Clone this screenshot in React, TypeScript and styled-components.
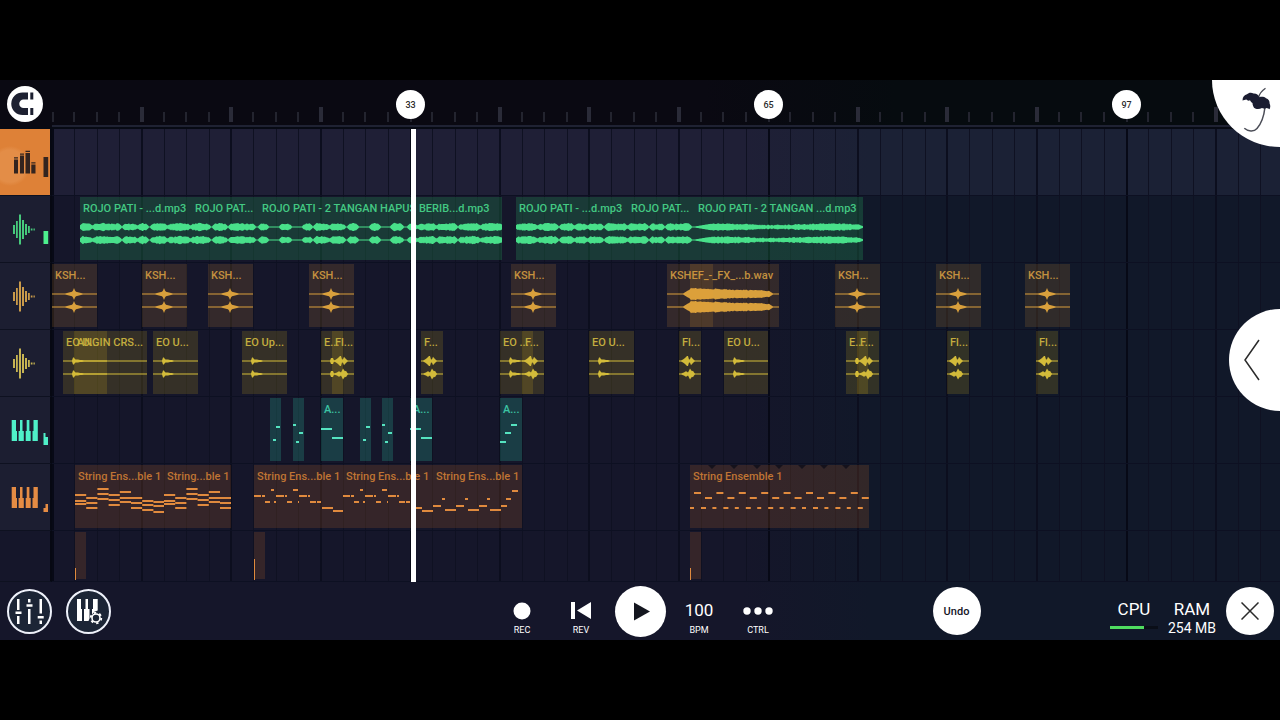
import React from "react";
import styled, { createGlobalStyle, css } from "styled-components";

/* ---------- theme values ---------- */

const BEAT_BLOCK = 358; // width of sixteen grid columns
const HEADER_W = 52;

type Tone = "green" | "amber" | "yellow" | "teal" | "orange";

const ink: Record<Tone, string> = {
  green: "#48e08a",
  amber: "#d9a03c",
  yellow: "#d3bb3a",
  teal: "#55e3c0",
  orange: "#e08a3e",
};
const labelInk: Record<Tone, string> = {
  green: "#43c983",
  amber: "#c3913f",
  yellow: "#c3ad3f",
  teal: "#3cc4a4",
  orange: "#bf7434",
};
const wash: Record<Tone, string> = {
  green: "rgba(48, 220, 110, 0.19)",
  amber: "rgba(240, 160, 50, 0.14)",
  yellow: "rgba(240, 200, 30, 0.15)",
  teal: "rgba(50, 220, 180, 0.2)",
  orange: "rgba(240, 130, 40, 0.15)",
};

/* One repeating block of vertical lines; `pick` returns the line's width or 0. */
const lineBlock = (color: string, pick: (i: number) => number) => {
  const stops: string[] = [];
  for (let i = 0; i < 16; i++) {
    const w = pick(i);
    if (!w) continue;
    const x = Math.round((BEAT_BLOCK / 16) * i);
    const a = i === 0 ? 0 : x - Math.floor(w / 2);
    stops.push(`transparent ${a}px, ${color} ${a}px, ${color} ${a + w}px, transparent ${a + w}px`);
  }
  return `linear-gradient(to right, ${stops.join(", ")})`;
};

const GlobalStyle = createGlobalStyle`
  * { box-sizing: border-box; }
  body {
    margin: 0;
    background: #000;
    color: #fff;
    font-family: Roboto, "Liberation Sans", sans-serif;
  }
  button { font: inherit; color: inherit; border: 0; padding: 0; background: none; cursor: pointer; }
  svg { display: block; }
`;

/* ---------- layout ---------- */

const Page = styled.div`
  min-height: 100vh;
  display: flex;
  flex-direction: column;
  justify-content: center;
`;

const Studio = styled.main`
  position: relative;
  overflow: hidden;
  background: linear-gradient(to right, #15162a 0, #15162a 58%, #111829 68%, #111829 100%);
`;

const Ruler = styled.header`
  display: flex;
  height: 49px;
  background: linear-gradient(to right, #0a0912 0, #0a0912 55%, #060b0f 70%);
  border-bottom: 2px solid #070a14;
`;

const RulerSide = styled.div`
  flex: 0 0 ${HEADER_W}px;
  padding: 6px 0 0 7px;
`;

const RulerTrack = styled.div`
  position: relative;
  flex: 1;
  border-bottom: 2px solid #1f2233;
  background-image: ${lineBlock("#23242f", (i) => (i % 4 || i === 0 ? 2 : 0))},
    ${lineBlock("#2a2b38", (i) => (i % 4 || i === 0 ? 0 : 4))};
  background-size: ${BEAT_BLOCK}px 10px, ${BEAT_BLOCK}px 15px;
  background-position: 0 32px, 0 27px;
  background-repeat: repeat-x;
`;

const BarMarker = styled.button<{ $x: number }>`
  position: absolute;
  top: 10px;
  left: ${(p) => p.$x - 14}px;
  width: 29px;
  height: 29px;
  border-radius: 50%;
  background: #fff;
  color: #2c2c2c;
  font-size: 9px;
  font-weight: 500;
  line-height: 28px;
`;

const Round = styled.button<{ $size: number }>`
  flex: none;
  display: grid;
  place-items: center;
  width: ${(p) => p.$size}px;
  height: ${(p) => p.$size}px;
  border-radius: 50%;
  background: #fff;
  color: #14161f;
`;

const OutlineRound = styled(Round)`
  background: #1c2536;
  border: 2px solid #eef1fa;
  color: #fff;
`;

const Playlist = styled.section`
  position: relative;
`;

const Row = styled.div<{ $short?: boolean }>`
  display: flex;
  height: ${(p) => (p.$short ? 51 : 67)}px;
`;

const TrackHead = styled.button<{ $tone?: "main" | "empty" }>`
  flex: 0 0 ${HEADER_W}px;
  border-right: 2px solid #060812;
  border-bottom: 1px solid #0e1120;
  background: #1c1e31;
  ${(p) =>
    p.$tone === "main" &&
    css`
      background: radial-gradient(circle at 10px 37px, #e38d47 0, #e38d47 16px, #de8137 20px);
    `}
  ${(p) =>
    p.$tone === "empty" &&
    css`
      background: transparent;
    `}
`;

const Lane = styled.div<{ $lit?: boolean }>`
  position: relative;
  flex: 1;
  overflow: hidden;
  border-bottom: 1px solid #0d1022;
  background-color: ${(p) => (p.$lit ? "rgba(90, 90, 130, 0.14)" : "transparent")};
  background-image: ${lineBlock("#070916", (i) => (i === 0 ? 2 : 0))},
    ${lineBlock("#0c0e1e", (i) => (i % 4 === 0 && i > 0 ? 2 : 0))},
    ${lineBlock("#0f1122", (i) => (i % 4 ? 1 : 0))};
  background-size: ${BEAT_BLOCK}px 100%;
`;

const ClipBox = styled.div<{ $x: number; $w: number; $tone: Tone }>`
  position: absolute;
  top: 1px;
  bottom: 2px;
  left: ${(p) => p.$x - HEADER_W}px;
  width: ${(p) => p.$w}px;
  background: ${(p) => wash[p.$tone]};
  color: ${(p) => ink[p.$tone]};
`;

const ClipName = styled.div<{ $tone: Tone }>`
  height: 18px;
  padding: 5px 0 0 3px;
  font-size: 11px;
  font-weight: 500;
  line-height: 13px;
  white-space: nowrap;
  color: ${(p) => labelInk[p.$tone]};
`;

const Playhead = styled.div`
  position: absolute;
  top: 0;
  bottom: 0;
  left: 411px;
  width: 5px;
  background: #fff;
`;

const LogoCorner = styled.button`
  position: absolute;
  top: 0;
  right: 0;
  width: 68px;
  height: 67px;
  border-radius: 0 0 0 100%;
  background: #fff;
`;

const DrawerHandle = styled.button`
  position: absolute;
  top: 229px;
  right: 0;
  width: 51px;
  height: 102px;
  padding-left: 14px;
  border-radius: 51px 0 0 51px;
  background: #fff;
`;

const Transport = styled.footer`
  display: grid;
  grid-template-columns: 1fr auto 1fr;
  align-items: center;
  height: 58px;
`;

const SideTools = styled.div`
  display: flex;
  gap: 14px;
  padding-left: 7px;
`;

const Controls = styled.div`
  display: flex;
  align-items: center;
`;

const Control = styled.button`
  width: 59px;
  height: 58px;
  padding-top: 17px;
  display: flex;
  flex-direction: column;
  align-items: center;
  gap: 1px;
  font-size: 9px;
  line-height: 14px;
`;

const PlaySlot = styled.div`
  display: grid;
  place-items: center;
  width: 59px;
  height: 58px;
`;

const ControlFace = styled.span`
  height: 23px;
  display: grid;
  place-items: center;
  font-size: 17px;
  line-height: 23px;
`;

const Status = styled.div`
  display: flex;
  align-items: center;
  justify-content: space-between;
  padding: 0 6px 0 145px;
  font-size: 11px;
  font-weight: 500;
`;

const Meters = styled.div`
  display: flex;
  align-items: center;
  gap: 10px;
`;

const Meter = styled.div`
  width: 48px;
  padding-top: 14px;
  text-align: center;
  font-size: 17px;
  font-weight: 400;
  line-height: 20px;
`;

const MeterValue = styled.div`
  height: 18px;
  font-size: 14px;
  line-height: 18px;
  white-space: nowrap;
`;

const CpuBar = styled.div`
  height: 3px;
  margin: 7px 0 8px;
  background: linear-gradient(to right, #4fdc5f 70%, #0a0e18 70%);
`;

/* ---------- clip drawings ---------- */

const noise = (n: number) => {
  const s = Math.sin(n * 127.1 + 11.7) * 43758.5453;
  return s - Math.floor(s);
};

/* Closed outline around a centre line, from an amplitude per pixel. */
const outline = (w: number, cy: number, amp: (x: number) => number) => {
  const up: string[] = [];
  const down: string[] = [];
  for (let x = 0; x <= w; x++) {
    const a = Math.max(0.5, amp(x));
    up.push(`${x} ${(cy - a).toFixed(1)}`);
    down.unshift(`${x} ${(cy + a).toFixed(1)}`);
  }
  return `M${up.join("L")}L${down.join("L")}Z`;
};

const Stereo = ({ w, amp }: { w: number; amp: (x: number, ch: number) => number }) => (
  <svg width={w} height="42" fill="currentColor" aria-hidden="true">
    <path d={outline(w, 12, (x) => amp(x, 0))} />
    <path d={outline(w, 25, (x) => amp(x, 1))} />
  </svg>
);

type Span = [number, number];

const phrases: Span[] = [
  [80, 92], [93, 121], [123, 137], [138, 148], [151, 167], [168, 190], [191, 210], [213, 227], [229, 255],
  [259, 268], [280, 291], [303, 312], [314, 329], [330, 345], [348, 358], [370, 380], [391, 403],
  [408, 417], [418, 436], [437, 457], [459, 480], [481, 503],
  [516, 537], [538, 558], [560, 574], [575, 587], [588, 603], [605, 627], [628, 648], [650, 664], [666, 691],
];

const songAmp = (origin: number) => (dx: number, ch: number) => {
  const x = origin + dx;
  if (x > 694) {
    const t = x - 694;
    const swell = 2 + Math.sin(t / 17) * 0.7 + noise(x + ch * 50) * 1.2;
    return Math.min(swell, t / 6 + 0.4, (864 - x) / 2.5 + 0.4);
  }
  const s = phrases.find(([a, b]) => x >= a && x <= b);
  if (!s) return 0.6;
  const edge = Math.min(x - s[0], s[1] - x);
  const level = 2.7 + Math.sin(x / 3.1) * 0.3 + noise(x + ch * 50) * 1.3;
  return Math.min(level, 1.8 + edge * 0.8);
};

const starAmp = (x: number) => {
  const d = Math.abs(x - 22);
  if (d < 2) return 6 - d * 2.5;
  return d < 9 ? 2.3 - (d - 2) * 0.26 : 0.5;
};
const hitAmp = (x: number) => {
  const d = x - 11;
  if (d < -1) return 0.5;
  if (d < 1) return 3.4;
  return Math.max(0.5, 1.9 - d * 0.13);
};
const snapAmp = (x: number) => (Math.abs(x - 11) < 2 ? 3 : 0.5);

const flipShapes = [
  [0.5, 0.5, 0.5, 1, 1.5, 2.2, 3, 4, 5, 5, 1.6, 1.8, 4.2, 3, 2, 1, 0.5],
  [0.5, 0.5, 0.5, 0.8, 1.2, 1.6, 2.2, 2.8, 2.2, 1.4, 3.5, 5.6, 4, 2.8, 3.2, 1.4, 0.5],
];
const flipAmp = (x: number, ch: number) => flipShapes[ch][x] ?? 0.5;

const sweepAmp = (x: number) => {
  if (x < 16) return 0.5;
  if (x < 24) return (x - 16) * 0.6 + 0.5;
  if (x > 102) return Math.max(0.5, 3 - (x - 102) * 0.6);
  return 5.2 - (x - 24) * 0.033 + noise(x) * 1.1;
};

type Note = [number, number, number]; // x, y, length

const Notes = ({ w, notes }: { w: number; notes: Note[] }) => (
  <svg width={w} height="44" fill="currentColor" aria-hidden="true">
    {notes.map(([x, y, l], i) => (
      <rect key={i} x={x} y={Math.round(y - 1)} width={l} height="2" />
    ))}
  </svg>
);

const chordRows = [
  [12, 17.5, 21], [15, 20, 25], [6, 11, 16], [12, 17, 22], [9, 15, 19],
  [15, 20, 25], [18, 22, 27], [19, 23, 29],
];
const chords = (count: number): Note[] =>
  chordRows.slice(0, count).flatMap((ys, i) => ys.map((y): Note => [i * 11.2, y, 11.2]));

const melodyA: Note[] = [
  [0, 13, 7], [8, 13, 3], [11, 19, 5], [17, 7, 3], [20, 19, 2], [22, 13, 8], [31, 13, 2], [33, 19, 5],
  [39, 7, 2], [41, 7, 3], [44, 19, 1], [45, 13, 8], [54, 13, 2], [56, 19, 6], [63, 19, 4],
  [68, 24.5, 11], [79, 27.5, 11],
];
const melodyB: Note[] = [
  [0, 23, 8], [9, 15.5, 3], [12, 26.5, 11], [23, 23, 8], [31, 15.5, 3], [34, 26.5, 11], [45, 23, 6],
  [50, 15.5, 5], [56, 8, 6],
];
const bridge: Note[] = [
  [0, 23, 8], [9, 15.5, 3],
];
const pulse: Note[] = Array.from({ length: 8 }).flatMap((_, i): Note[] => {
  const x = i * 22.4;
  return [
    [x + 4, 9.5, 7], [x + 15, 14.5, 7], [x, 25, 4], [x + 11, 25, 5],
  ];
});

/* The last phrase opens with a low figure, then climbs over its final bar. */
const melodyC: Note[] = [
  ...bridge,
  ...melodyB.map(([x, y, l]): Note => [x + 23, y, l]).filter(([x]) => x < 90),
  [12, 26.5, 11],
];

const pair: Note[] = [[6, 10.5, 4], [3, 23.5, 3]];
const triple: Note[] = [[0, 8.5, 3], [6, 17, 4], [3, 25.5, 3]];
const stepDown: Note[] = [[0, 13, 11], [11, 21.5, 11]];
const stepUp: Note[] = [[0, 25.5, 6], [5, 17, 6], [11, 8.5, 6]];

/* ---------- clips ---------- */

interface ClipProps {
  x: number;
  w: number;
  tone: Tone;
  name?: string;
  children?: React.ReactNode;
}

const Clip = ({ x, w, tone, name, children }: ClipProps) => (
  <ClipBox $x={x} $w={w} $tone={tone}>
    <ClipName $tone={tone}>{name}</ClipName>
    {children}
  </ClipBox>
);

const songs: [number, number, string][] = [
  [80, 112, "ROJO PATI - ...d.mp3"],
  [192, 67, "ROJO PAT..."],
  [259, 243, "ROJO PATI - 2 TANGAN HAPUS BERIB...d.mp3"],
  [516, 112, "ROJO PATI - ...d.mp3"],
  [628, 67, "ROJO PAT..."],
  [695, 168, "ROJO PATI - 2 TANGAN ...d.mp3"],
];
const kshs = [52, 142, 208, 309, 511, 835, 936, 1025];
const uplifts: [number, number, string][] = [
  [63, 44, "EO U..."], [153, 45, "EO U..."], [242, 45, "EO Up..."], [321, 22, "E..."], [500, 33, "EO ..."],
  [589, 45, "EO U..."], [724, 44, "EO U..."], [846, 22, "E..."],
];
const flips: [number, string][] = [
  [332, "Fl..."], [421, "F..."], [522, "F..."], [679, "Fl..."], [857, "F..."], [947, "Fl..."], [1036, "Fl..."],
];
const arps: [number, number, string, Note[]][] = [
  [270, 11, "", pair], [293, 11, "", triple], [321, 22, "A...", stepDown], [360, 11, "", pair],
  [382, 11, "", triple], [410, 22, "A...", stepDown], [500, 22, "A...", stepUp],
];
const strings: [number, number, string, Note[]][] = [
  [75, 89, "String Ens...ble 1", chords(8)],
  [164, 67, "String...ble 1", chords(6)],
  [254, 89, "String Ens...ble 1", melodyA],
  [343, 90, "String Ens...ble 1", melodyA],
  [433, 89, "String Ens...ble 1", melodyC],
];

const CutMarks = styled.svg`
  position: absolute;
  top: 0;
  left: 0;
`;

/* ---------- icons ---------- */

const LevelsIcon = () => (
  <svg width="50" height="66" fill="#33241f" aria-hidden="true">
    <path d="M14 30.500h4v14h-4zM20 26.500h4v18h-4zM25.500 24h4.500v20.500h-4.500zM31.300 35.500h4.200v9h-4.200zM43.500 28h4.700v20h-4.700z" />
    <path d="M14 28.300h4v1.300h-4zM20 24.500h4v1.200h-4zM25.500 21.800h4.500v1.300h-4.500zM31.300 33.200h4.200v1.300h-4.200z" />
  </svg>
);

const WaveIcon = ({ color, level }: { color: string; level?: boolean }) => (
  <svg width="50" height="66" fill={color} aria-hidden="true">
    <path d="M13 29h2v9h-2zM16 25h1.800v17H16zM19 18.500h2v30h-2zM22 24h2v19h-2zM25 28h2v11h-2zM28 30h1.800v7H28zM30.800 32.500h1.700v2h-1.700zM33.500 32.500h1.300v2h-1.300z" />
    {level && <path fill="#4df08e" d="M43.500 35h4.700v13h-4.700z" />}
  </svg>
);

const KeysIcon = ({ color, level }: { color: string; level: string }) => (
  <svg width="50" height="66" fill={color} aria-hidden="true">
    <path d="M11.700 23H16V34h1v10h-5.300zM20 23h2.500v11h1.300v10h-5.200V34H20zM26.700 23h2.700v11h1.300v10h-5V34h1zM33.500 23h4.300v21h-5.300V34h1z" />
    <path d={level} />
  </svg>
);

const MagnetIcon = () => (
  <svg width="36" height="36" fill="#1d2031" aria-hidden="true">
    <path d="M21 6.500h-5.500a11 11 0 0 0 0 22.500H21v-7h-4.500a4.200 4.200 0 0 1 0-8.500H21zM23.300 6.500h3v7h-3zM23.300 22h3v7h-3z" />
  </svg>
);

const PalmIcon = () => (
  <svg width="68" height="67" fill="none" aria-hidden="true">
    <path d="M46.500 17.500Q48 12 53.500 8.300" stroke="#4b4d57" strokeWidth="1.300" />
    <path d="M53 27C52 36 49 44 45 48.500C42 52 36 51.500 32.300 48.300" stroke="#4b4d57" strokeWidth="1.500" />
    <path
      fill="#1b1d31"
      d="M30.500 20.500C30.500 17 32.500 14.800 35 14.300C36.500 12.500 39.500 12.200 41.500 13.500C44.500 13.300 46.500 15 47.300 17.200C49.500 16.500 52.500 16.800 54 18.300C56.500 19 57.800 21 57.600 23.500C58.600 25.500 58.400 27.500 57.600 29.200C56.600 28.800 55.600 28 54.500 28C53 29 51.500 28.500 50 28C47.500 29.500 44 29.500 42 27.800C41 26 40.500 24.500 40.500 23C39.300 22.500 38.500 21.500 38 20.300C36.500 21 35.200 20.500 34.500 19.500C33.300 19.300 31.800 20.500 30.500 20.500Z"
    />
  </svg>
);

const MixerIcon = () => (
  <svg width="41" height="41" fill="#fff" aria-hidden="true">
    <path d="M8 8h2.500v11H8zM8 25h2.500v8H8zM6.500 20.500h6v2.500h-6zM19 8h2.500v3.500H19zM19 18h2.500v15H19zM17.500 13.300h6v2.500h-6zM30.500 8H33v14.500h-2.500zM30.500 29.500H33V33h-2.500zM28.700 25h6v2.500h-6z" />
  </svg>
);

const KeysGearIcon = () => (
  <svg width="41" height="41" aria-hidden="true">
    <path
      fill="#fff"
      d="M9 8h4v10h1v12H9zM17.500 8h2.500v10h1.500v9.500l-1 2.500h-4.500V18h1.500zM25 8h4.700v11.500l-3 1-2.700 3V18h1z"
    />
    <circle cx="28" cy="27" r="4" fill="none" stroke="#fff" strokeWidth="1.600" />
    <circle cx="28" cy="27" r="5.300" fill="none" stroke="#fff" strokeWidth="1.800" strokeDasharray="2.400 3.150" />
  </svg>
);

/* ---------- page ---------- */

export default function App() {
  return (
    <Page>
      <GlobalStyle />
      <Studio>
        <Ruler>
          <RulerSide>
            <Round $size={36} aria-label="Snap">
              <MagnetIcon />
            </Round>
          </RulerSide>
          <RulerTrack>
            {[33, 65, 97].map((bar, i) => (
              <BarMarker key={bar} $x={BEAT_BLOCK * (i + 1)}>
                {bar}
              </BarMarker>
            ))}
          </RulerTrack>
        </Ruler>

        <Playlist aria-label="Playlist">
          <Row>
            <TrackHead $tone="main" aria-label="Master track">
              <LevelsIcon />
            </TrackHead>
            <Lane $lit />
          </Row>

          <Row>
            <TrackHead aria-label="Audio track 1">
              <WaveIcon color="#46c97c" level />
            </TrackHead>
            <Lane>
              {songs.map(([x, w, name]) => (
                <Clip key={x} x={x} w={w} tone="green" name={name}>
                  <Stereo w={w} amp={songAmp(x)} />
                </Clip>
              ))}
            </Lane>
          </Row>

          <Row>
            <TrackHead aria-label="Audio track 2">
              <WaveIcon color="#c99a4a" />
            </TrackHead>
            <Lane>
              {kshs.map((x) => (
                <Clip key={x} x={x} w={45} tone="amber" name="KSH...">
                  <Stereo w={45} amp={starAmp} />
                </Clip>
              ))}
              <Clip x={667} w={112} tone="amber" name="KSHEF_-_FX_...b.wav">
                <Stereo w={112} amp={sweepAmp} />
              </Clip>
              <Clip x={690} w={23} tone="amber" />
            </Lane>
          </Row>

          <Row>
            <TrackHead aria-label="Audio track 3">
              <WaveIcon color="#c6b352" />
            </TrackHead>
            <Lane>
              {uplifts.map(([x, w, name]) => (
                <Clip key={x} x={x} w={w} tone="yellow" name={name}>
                  <Stereo w={w} amp={w < 30 ? snapAmp : hitAmp} />
                </Clip>
              ))}
              <Clip x={74} w={73} tone="yellow" name="ANGIN CRS...">
                <Stereo w={73} amp={() => 0.5} />
              </Clip>
              {flips.map(([x, name]) => (
                <Clip key={x} x={x} w={22} tone="yellow" name={name}>
                  <Stereo w={22} amp={flipAmp} />
                </Clip>
              ))}
            </Lane>
          </Row>

          <Row>
            <TrackHead aria-label="Instrument track 1">
              <KeysIcon color="#4ff0c8" level="M43.500 36h2v4h2.500v8h-4.500z" />
            </TrackHead>
            <Lane>
              {arps.map(([x, w, name, notes]) => (
                <Clip key={x} x={x} w={w} tone="teal" name={name}>
                  <Notes w={w} notes={notes} />
                </Clip>
              ))}
            </Lane>
          </Row>

          <Row>
            <TrackHead aria-label="Instrument track 2">
              <KeysIcon color="#e58c44" level="M43.500 44h2v-4h2.500v8h-4.500z" />
            </TrackHead>
            <Lane>
              {strings.map(([x, w, name, notes]) => (
                <Clip key={x} x={x} w={w} tone="orange" name={name}>
                  <Notes w={w} notes={notes} />
                </Clip>
              ))}
              <Clip x={690} w={179} tone="orange" name="String Ensemble 1">
                <Notes w={179} notes={pulse} />
                <CutMarks width="179" height="5" fill="#15121c" aria-hidden="true">
                  {Array.from({ length: 7 }, (_, i) => (
                    <path key={i} d={`M${Math.round(18 + i * 22.4)} 0h8l-4 4z`} />
                  ))}
                </CutMarks>
              </Clip>
            </Lane>
          </Row>

          <Row $short>
            <TrackHead $tone="empty" aria-label="Instrument track 3" />
            <Lane>
              {([[75, 18], [254, 9], [690, 18]] as Span[]).map(([x, top]) => (
                <Clip key={x} x={x} w={11} tone="orange">
                  <svg width="11" height="30" fill="currentColor" aria-hidden="true">
                    <rect y={top} width="1" height="30" />
                  </svg>
                </Clip>
              ))}
            </Lane>
          </Row>

          <Playhead />
        </Playlist>

        <Transport>
          <SideTools>
            <OutlineRound $size={45} aria-label="Mixer">
              <MixerIcon />
            </OutlineRound>
            <OutlineRound $size={45} aria-label="Instrument settings">
              <KeysGearIcon />
            </OutlineRound>
          </SideTools>

          <Controls>
            <Control>
              <ControlFace>
                <svg width="18" height="18" fill="#fff" aria-hidden="true">
                  <circle cx="9" cy="9" r="8.500" />
                </svg>
              </ControlFace>
              REC
            </Control>
            <Control>
              <ControlFace>
                <svg width="20" height="17" fill="#fff" aria-hidden="true">
                  <path d="M0 0h4v17H0zM20 0v17L6 8.500z" />
                </svg>
              </ControlFace>
              REV
            </Control>
            <PlaySlot>
              <Round $size={51} aria-label="Play">
                <svg width="51" height="51" fill="#14161f" aria-hidden="true">
                  <path d="M19 16.500v18L35 25.500z" />
                </svg>
              </Round>
            </PlaySlot>
            <Control>
              <ControlFace>100</ControlFace>
              BPM
            </Control>
            <Control>
              <ControlFace>
                <svg width="30" height="8" fill="#fff" aria-hidden="true">
                  <circle cx="4" cy="4" r="3.700" />
                  <circle cx="15" cy="4" r="3.700" />
                  <circle cx="26" cy="4" r="3.700" />
                </svg>
              </ControlFace>
              CTRL
            </Control>
          </Controls>

          <Status>
            <Round $size={48}>Undo</Round>
            <Meters>
              <Meter>
                CPU
                <CpuBar />
              </Meter>
              <Meter>
                RAM
                <MeterValue>254 MB</MeterValue>
              </Meter>
              <Round $size={48} aria-label="Close">
                <svg width="18" height="18" stroke="#2b2b2b" strokeWidth="1.500" aria-hidden="true">
                  <path d="M.5 .5l17 17M17.500 .5l-17 17" />
                </svg>
              </Round>
            </Meters>
          </Status>
        </Transport>

        <LogoCorner aria-label="Menu">
          <PalmIcon />
        </LogoCorner>
        <DrawerHandle aria-label="Open browser">
          <svg width="20" height="42" fill="none" stroke="#2b2b2b" strokeWidth="1.500" aria-hidden="true">
            <path d="M16 1L2 21l14 20" />
          </svg>
        </DrawerHandle>
      </Studio>
    </Page>
  );
}
